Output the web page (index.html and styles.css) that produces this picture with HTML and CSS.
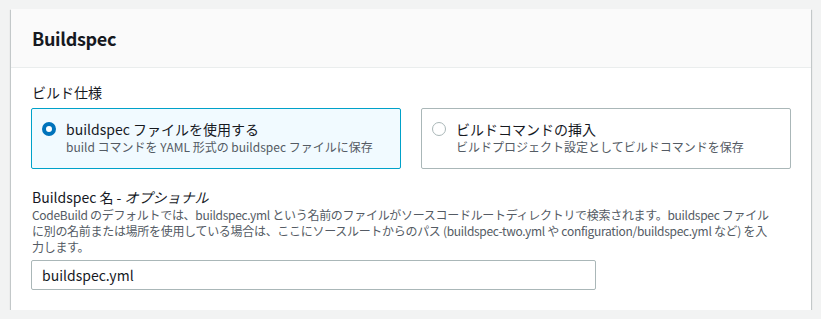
FILE: index.html
```html
<!DOCTYPE html>
<html lang="ja">
<head>
    <meta charset="UTF-8">
    <meta name="viewport" content="width=device-width, initial-scale=1.0">
    <title>Buildspec</title>
    <link rel="stylesheet" href="styles.css">
</head>
<body>

<div class="panel">
    <div class="panel-header">
        <h2>Buildspec</h2>
    </div>
    <div class="panel-body">
        <div class="field">
            <div class="field-label">ビルド仕様</div>
            <div class="tiles">
                <label class="tile tile-selected">
                    <span class="radio radio-on"></span>
                    <span class="tile-text">
                        <span class="tile-title">buildspec ファイルを使用する</span>
                        <span class="tile-desc">build コマンドを YAML 形式の buildspec ファイルに保存</span>
                    </span>
                </label>
                <label class="tile">
                    <span class="radio"></span>
                    <span class="tile-text">
                        <span class="tile-title">ビルドコマンドの挿入</span>
                        <span class="tile-desc">ビルドプロジェクト設定としてビルドコマンドを保存</span>
                    </span>
                </label>
            </div>
        </div>

        <div class="field field-name">
            <div class="field-label">Buildspec 名 - <i>オプショナル</i></div>
            <div class="field-desc">
                CodeBuild のデフォルトでは、buildspec.yml という名前のファイルがソースコードルートディレクトリで検索されます。buildspec ファイル<br>
                に別の名前または場所を使用している場合は、ここにソースルートからのパス (buildspec-two.yml や configuration/buildspec.yml など) を入<br>
                力します。
            </div>
            <input class="text-input" type="text" value="buildspec.yml">
        </div>
    </div>
</div>

</body>
</html>
```

FILE: styles.css
```css
body {
    margin: 0;
    padding: 9px 10px 0 11px;
    background-color: #f2f3f3;
    font-family: "Noto Sans CJK JP", "Noto Sans", sans-serif;
    color: #16191f;
    font-size: 14px;
}
.panel {
    width: 800px;
    background-color: #fff;
    box-shadow: 0 1px 1px 0 rgba(0, 28, 36, 0.3), 1px 1px 1px 0 rgba(0, 28, 36, 0.15), -1px 1px 1px 0 rgba(0, 28, 36, 0.15);
}
.panel-header {
    background-color: #fafafa;
    border-bottom: 1px solid #eaeded;
    padding: 18px 21px;
}
.panel-header h2 {
    margin: 0;
    font-size: 18px;
    line-height: 22px;
    font-weight: 700;
    letter-spacing: -0.3px;
}
.panel-body {
    padding: 14px 20px 20px 20px;
}
.field-label {
    line-height: 20px;
    margin-left: 1px;
    margin-bottom: 6px;
}
.tiles {
    display: grid;
    grid-template-columns: 370px 370px;
    gap: 20px;
}
.tile {
    display: flex;
    gap: 10px;
    align-items: flex-start;
    padding: 10px 10px 13px 10px;
    border: 1px solid #aab7b8;
    border-radius: 2px;
    background-color: #fff;
}
.tile-selected {
    border-color: #00a1c9;
    background-color: #f1faff;
}
.radio {
    flex: none;
    box-sizing: border-box;
    width: 14px;
    height: 14px;
    margin-top: 3px;
    border: 1px solid #aab7b8;
    border-radius: 50%;
    background-color: #fff;
}
.radio-on {
    border: 4px solid #0073bb;
}
.tile-text {
    display: flex;
    flex-direction: column;
}
.tile-title {
    line-height: 20px;
}
.tile-desc {
    font-size: 12px;
    line-height: 16px;
    color: #545b64;
}
.field-name {
    margin-top: 18px;
}
.field-name .field-label {
    margin-bottom: 0;
}
.field-desc {
    font-size: 12px;
    line-height: 16px;
    color: #545b64;
    margin-left: 1px;
    white-space: nowrap;
    letter-spacing: -0.3px;
}
.text-input {
    display: block;
    box-sizing: border-box;
    width: 565px;
    height: 30px;
    margin-top: 5px;
    padding: 4px 10px;
    border: 1px solid #aab7b8;
    border-radius: 2px;
    font-family: inherit;
    font-size: 14px;
    color: #16191f;
    background-color: #fff;
}
```
